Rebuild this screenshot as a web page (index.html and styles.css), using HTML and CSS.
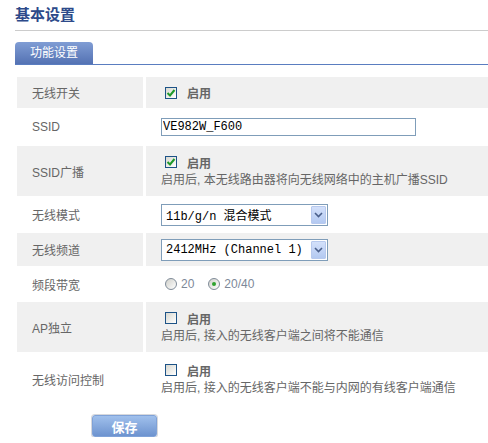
FILE: index.html
```html
<!DOCTYPE html>
<html lang="zh-CN">
  <head>
    <meta charset="UTF-8" />
    <meta name="viewport" content="width=device-width, initial-scale=1.0" />
    <title>基本设置</title>
    <link rel="stylesheet" href="styles.css">
  </head>
  <body>
    <div class="page">
      <h2 class="title">基本设置</h2>
      <div class="tabs"><span class="tab">功能设置</span></div>

      <div class="form">
        <!-- 无线开关 -->
        <div class="row gray h-switch">
          <div class="label">无线开关</div>
          <div class="value">
            <div class="check">
              <span class="box"><svg width="10" height="10" viewBox="0 0 10 10"><path d="M1.5 5 L4 7.5 L8.5 2" fill="none" stroke="#1f9a2a" stroke-width="2"/></svg></span>
              <b>启用</b>
            </div>
          </div>
        </div>

        <div class="row h-ssid">
          <div class="label">SSID</div>
          <div class="value">
            <input type="text" class="text-input" value="VE982W_F600" />
          </div>
        </div>

        <div class="row gray h-tall">
          <div class="label">SSID广播</div>
          <div class="value">
            <div class="check">
              <span class="box"><svg width="10" height="10" viewBox="0 0 10 10"><path d="M1.5 5 L4 7.5 L8.5 2" fill="none" stroke="#1f9a2a" stroke-width="2"/></svg></span>
              <b>启用</b>
            </div>
            <p class="desc">启用后, 本无线路由器将向无线网络中的主机广播SSID</p>
          </div>
        </div>

        <div class="row h-mode">
          <div class="label">无线模式</div>
          <div class="value">
            <div class="select">
              <span class="select-text">11b/g/n 混合模式</span>
              <span class="arrow"><svg width="9" height="6" viewBox="0 0 9 6"><path d="M1 1 L4.5 4.5 L8 1" fill="none" stroke="#4a5f8a" stroke-width="1.6"/></svg></span>
            </div>
          </div>
        </div>

        <div class="row gray h-channel">
          <div class="label">无线频道</div>
          <div class="value">
            <div class="select">
              <span class="select-text">2412MHz (Channel 1)</span>
              <span class="arrow"><svg width="9" height="6" viewBox="0 0 9 6"><path d="M1 1 L4.5 4.5 L8 1" fill="none" stroke="#4a5f8a" stroke-width="1.6"/></svg></span>
            </div>
          </div>
        </div>

        <div class="row h-band">
          <div class="label">频段带宽</div>
          <div class="value">
            <div class="radios">
              <span class="radio"></span><span class="radio-text">20</span>
              <span class="radio on"></span><span class="radio-text">20/40</span>
            </div>
          </div>
        </div>

        <div class="row gray h-tall">
          <div class="label">AP独立</div>
          <div class="value">
            <div class="check">
              <span class="box"></span>
              <b>启用</b>
            </div>
            <p class="desc">启用后, 接入的无线客户端之间将不能通信</p>
          </div>
        </div>

        <div class="row h-last">
          <div class="label">无线访问控制</div>
          <div class="value">
            <div class="check">
              <span class="box"></span>
              <b>启用</b>
            </div>
            <p class="desc">启用后, 接入的无线客户端不能与内网的有线客户端通信</p>
          </div>
        </div>
      </div>

      <div class="actions">
        <button class="btn-save">保存</button>
      </div>
    </div>
  </body>
</html>
```

FILE: styles.css
```css
* {
  box-sizing: border-box;
  margin: 0;
  padding: 0;
}
body {
  font-family: "Liberation Sans", "Noto Sans CJK SC", sans-serif;
  font-size: 12px;
  color: #666;
  background-color: #fff;
}
.page {
  padding-left: 15px;
}
.title {
  height: 31px;
  line-height: 30px;
  font-size: 15px;
  color: #2d4a8a;
  border-bottom: 1px solid #ccc;
}
.tabs {
  margin-top: 11px;
  height: 23px;
  border-bottom: 1px solid #5a7dc0;
}
.tab {
  display: inline-block;
  width: 78px;
  height: 22px;
  line-height: 22px;
  text-align: center;
  color: #fff;
  background: linear-gradient(#809dd4, #5472b3);
  border-radius: 4px 4px 0 0;
}
.form {
  margin: 12px 0 0 2px;
}
.row {
  display: grid;
  grid-template-columns: 126px 1fr;
  column-gap: 3px;
}
.row.gray > div {
  background-color: #f0f0f0;
}
.h-switch { height: 31px; }
.h-ssid { height: 38px; }
.h-tall { height: 50px; }
.h-mode { height: 37px; }
.h-channel { height: 33px; }
.h-band { height: 36px; }
.h-last { height: 54px; }
.label {
  display: flex;
  align-items: center;
  padding-left: 15px;
}
.value {
  display: flex;
  flex-direction: column;
  justify-content: center;
  padding-left: 15px;
}
.check {
  display: flex;
  align-items: center;
  height: 18px;
}
.check b {
  font-weight: bold;
}
.box {
  width: 12px;
  height: 12px;
  margin: 0 10px 0 4px;
  border: 1px solid #1d5387;
  background: linear-gradient(135deg, #d8d8d0, #fff);
  display: flex;
  align-items: center;
  justify-content: center;
}
.desc {
  line-height: 18px;
}
.text-input {
  width: 255px;
  height: 18px;
  border: 1px solid #7f9db9;
  padding-left: 1px;
  font-family: "Liberation Mono", "Noto Sans CJK SC", monospace;
  font-size: 12px;
  color: #000;
  outline: none;
}
.select {
  display: flex;
  align-items: center;
  width: 167px;
  height: 22px;
  border: 1px solid #7f9db9;
  padding: 1px;
  background-color: #fff;
}
.select-text {
  flex: 1;
  padding-left: 3px;
  font-family: "Liberation Mono", "Noto Sans CJK SC", monospace;
  font-size: 12px;
  color: #000;
  white-space: nowrap;
}
.arrow {
  width: 15px;
  height: 18px;
  border: 1px solid #b7c9ee;
  border-radius: 1px;
  background: linear-gradient(#d3e0fa, #b3c9f1);
  display: flex;
  align-items: center;
  justify-content: center;
}
.radios {
  display: flex;
  align-items: center;
  height: 18px;
}
.radio {
  width: 12px;
  height: 12px;
  margin-left: 4px;
  border: 1px solid #7f8b98;
  border-radius: 50%;
  background: linear-gradient(135deg, #d0d0ca, #fff);
  display: flex;
  align-items: center;
  justify-content: center;
}
.radio.on::after {
  content: "";
  width: 4px;
  height: 4px;
  border-radius: 50%;
  background-color: #2fa22f;
}
.radio-text {
  margin: 0 10px 0 4px;
  color: #7d8898;
}
.actions {
  margin-top: 9px;
}
.btn-save {
  margin-left: 77px;
  width: 65px;
  height: 22px;
  border: 1px solid #7fa2d8;
  border-radius: 3px;
  box-shadow: 0 0 0 1px #d6d8dc;
  background: linear-gradient(#a0c0ec, #6d93cf);
  color: #fff;
  font-family: "Liberation Sans", "Noto Sans CJK SC", sans-serif;
  font-size: 13px;
  font-weight: bold;
}
```
